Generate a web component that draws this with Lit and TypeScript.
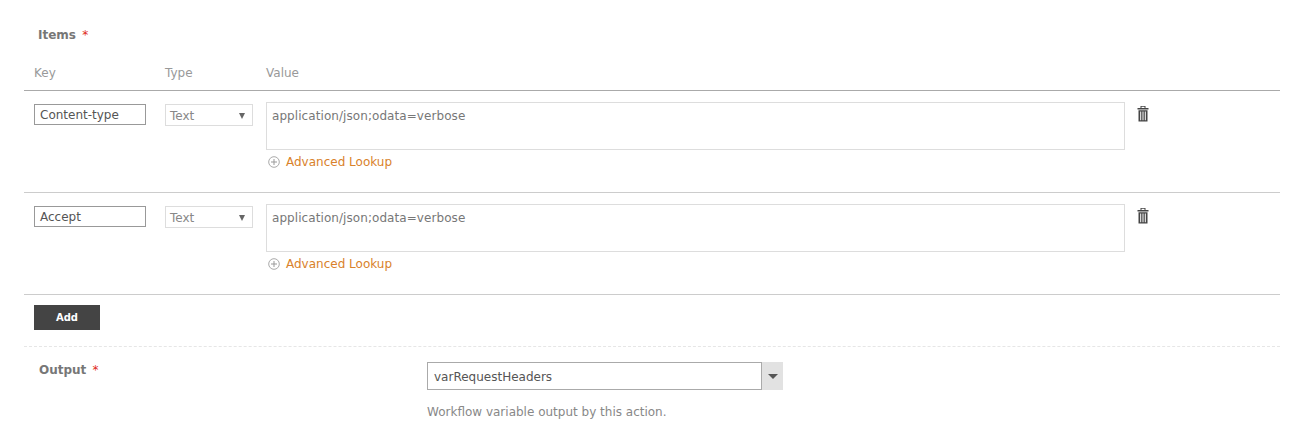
import { LitElement, html, css } from "lit";
import { customElement } from "lit/decorators.js";

const trash = html`<svg class="trash" width="12" height="16" viewBox="0 0 12 16"><path fill="#444" fill-rule="evenodd" d="M3.500 0h5v2h3v1.500H.5V2h3zM4.500 .8V2h3V.8zM1.500 4.200h9V15.500h-9zM3.200 5.500v8.800h1V5.500zM5.500 5.500v8.800h1V5.500zM7.800 5.500v8.800h1V5.500z"/></svg>`;
const plus = html`<svg class="plus" width="12" height="12" viewBox="0 0 12 12"><circle cx="6" cy="6" r="5.300" fill="none" stroke="#aaa"/><path d="M6 3v6M3 6h6" stroke="#999" fill="none"/></svg>`;

@customElement("app-root")
export class AppRoot extends LitElement {
  static styles = css`
    :host { display: block; width: 1299px; height: 429px; overflow: hidden; background: #fff; font-family: "DejaVu Sans", sans-serif; font-size: 12px; color: #666; }
    .wrap { padding: 0 19px 0 24px; }
    .title { font-weight: 700; color: #777; padding: 28px 0 0 14px; line-height: 14px; box-sizing: border-box; height: 38px; }
    .req { color: #e02a20; font-weight: 400; margin-left: 2px; }
    .grid { display: grid; grid-template-columns: 131px 101px 871px 40px; padding-left: 10px; }
    .head { color: #999; padding-top: 28px; box-sizing: border-box; height: 53px; border-bottom: 1px solid #aaa; line-height: 14px; }
    .row { height: 102px; border-bottom: 1px solid #ccc; box-sizing: border-box; padding-top: 11px; align-items: start; }
    .key { width: 112px; height: 21px; box-sizing: border-box; border: 1px solid #999; padding-left: 5px; line-height: 20px; color: #555; margin-top: 2px; }
    .sel { width: 88px; height: 22px; box-sizing: border-box; border: 1px solid #ddd; padding: 1px 7px 0 4px; line-height: 22px; color: #888; display: flex; justify-content: space-between; align-items: center; margin-top: 2px; }
    .sel i { width: 0; height: 0; border: 3.500px solid transparent; border-top: 6px solid #666; border-bottom: 0; }
    .val-wrap { width: 859px; }
    .val { box-sizing: border-box; height: 48px; border: 1px solid #ddd; padding: 0 5px; line-height: 26px; color: #777; letter-spacing: 0.07px; }
    .look { display: flex; align-items: center; gap: 6px; margin: 5px 0 0 2px; color: #d9822b; line-height: 14px; height: 14px; }
    .trash { display: block; margin-top: 4px; }
    .add { margin: 10px 0 0 10px; width: 66px; height: 25px; background: #444; color: #fff; font-weight: 700; font-size: 10px; display: flex; align-items: center; justify-content: center; }
    .out { margin-top: 16px; border-top: 1px dashed #e6e6e6; display: grid; grid-template-columns: 403px 356px; height: 70px; }
    .olabel { font-weight: 700; color: #777; padding: 16px 0 0 15px; line-height: 14px; }
    .combo { display: flex; margin-top: 15px; height: 28px; }
    .cinput { flex: 1; box-sizing: border-box; border: 1px solid #aaa; padding-left: 6px; line-height: 28px; color: #555; }
    .cbtn { width: 21px; background: #e2e2e2; display: flex; align-items: center; justify-content: center; }
    .cbtn i { width: 0; height: 0; border: 5px solid transparent; border-top: 5px solid #555; border-bottom: 0; }
    .hint { color: #888; margin-top: 15px; line-height: 14px; }
  `;
  private row(k: string) {
    return html`<div class="grid row">
      <div class="key">${k}</div>
      <div class="sel">Text<i></i></div>
      <div class="val-wrap">
        <div class="val">application/json;odata=verbose</div>
        <div class="look">${plus}<span>Advanced Lookup</span></div>
      </div>
      <div>${trash}</div>
    </div>`;
  }
  render() {
    return html`<div class="wrap">
      <div class="title">Items <span class="req">*</span></div>
      <div class="grid head"><div>Key</div><div>Type</div><div>Value</div><div></div></div>
      ${this.row("Content-type")}
      ${this.row("Accept")}
      <div class="add">Add</div>
      <div class="out">
        <div class="olabel">Output <span class="req">*</span></div>
        <div>
          <div class="combo"><div class="cinput">varRequestHeaders</div><div class="cbtn"><i></i></div></div>
          <div class="hint">Workflow variable output by this action.</div>
        </div>
      </div>
    </div>`;
  }
}
